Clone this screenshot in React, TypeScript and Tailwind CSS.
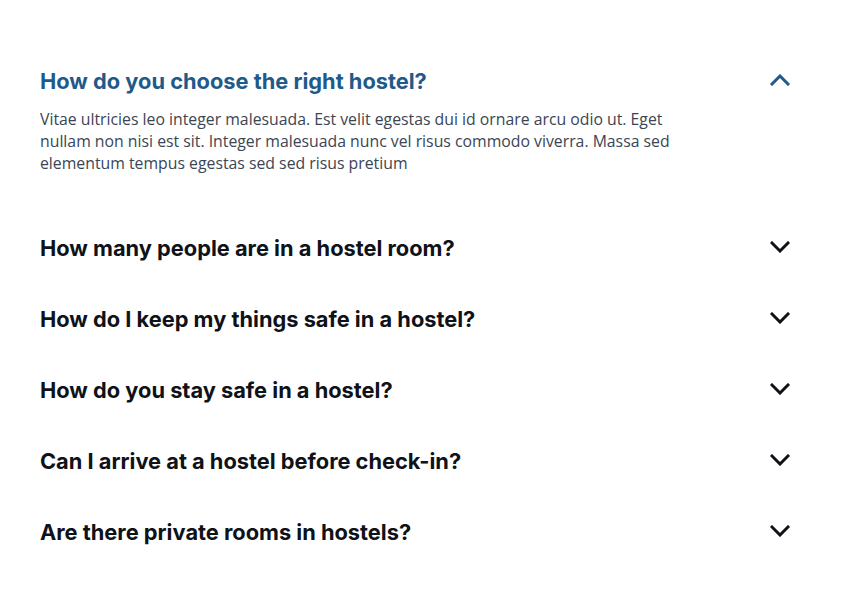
import { useState } from "react";

const FAQS = [
  {
    q: "How do you choose the right hostel?",
    a: "Vitae ultricies leo integer malesuada. Est velit egestas dui id ornare arcu odio ut. Eget nullam non nisi est sit. Integer malesuada nunc vel risus commodo viverra. Massa sed elementum tempus egestas sed sed risus pretium",
  },
  {
    q: "How many people are in a hostel room?",
    a: "Vitae ultricies leo integer malesuada. Est velit egestas dui id ornare arcu odio ut.",
  },
  {
    q: "How do I keep my things safe in a hostel?",
    a: "Vitae ultricies leo integer malesuada. Est velit egestas dui id ornare arcu odio ut.",
  },
  {
    q: "How do you stay safe in a hostel?",
    a: "Vitae ultricies leo integer malesuada. Est velit egestas dui id ornare arcu odio ut.",
  },
  {
    q: "Can I arrive at a hostel before check-in?",
    a: "Vitae ultricies leo integer malesuada. Est velit egestas dui id ornare arcu odio ut.",
  },
  {
    q: "Are there private rooms in hostels?",
    a: "Vitae ultricies leo integer malesuada. Est velit egestas dui id ornare arcu odio ut.",
  },
];

function Chevron({ up }: { up: boolean }) {
  return (
    <svg width="20" height="12" viewBox="0 0 20 12" fill="none" className="shrink-0 -translate-y-0.5">
      <polyline
        points={up ? "2,10 10,2 18,10" : "2,2 10,10 18,2"}
        stroke="currentColor"
        strokeWidth="3"
        strokeLinecap="square"
        strokeLinejoin="miter"
      />
    </svg>
  );
}

export default function App() {
  const [open, setOpen] = useState(0);

  return (
    <div className="min-h-screen bg-white px-10 pt-[46px] pb-10">
      <div className="flex flex-col pr-[11px]">
        {FAQS.map((item, i) => {
          const isOpen = open === i;
          return (
            <div key={item.q} className="py-[21px]">
              <button
                type="button"
                onClick={() => setOpen(isOpen ? -1 : i)}
                className={`flex w-full items-center justify-between text-left font-['Inter',sans-serif] text-[21.8px] leading-[29px] font-bold ${
                  isOpen ? "text-[#1f5a8a]" : "text-[#0f1217]"
                }`}
              >
                <span>{item.q}</span>
                <Chevron up={isOpen} />
              </button>
              {isOpen && (
                <p className="mt-3 mb-[18px] max-w-[650px] font-['Open_Sans',sans-serif] text-[15.8px] leading-[22px] text-[#3b4554]">
                  {item.a}
                </p>
              )}
            </div>
          );
        })}
      </div>
    </div>
  );
}
